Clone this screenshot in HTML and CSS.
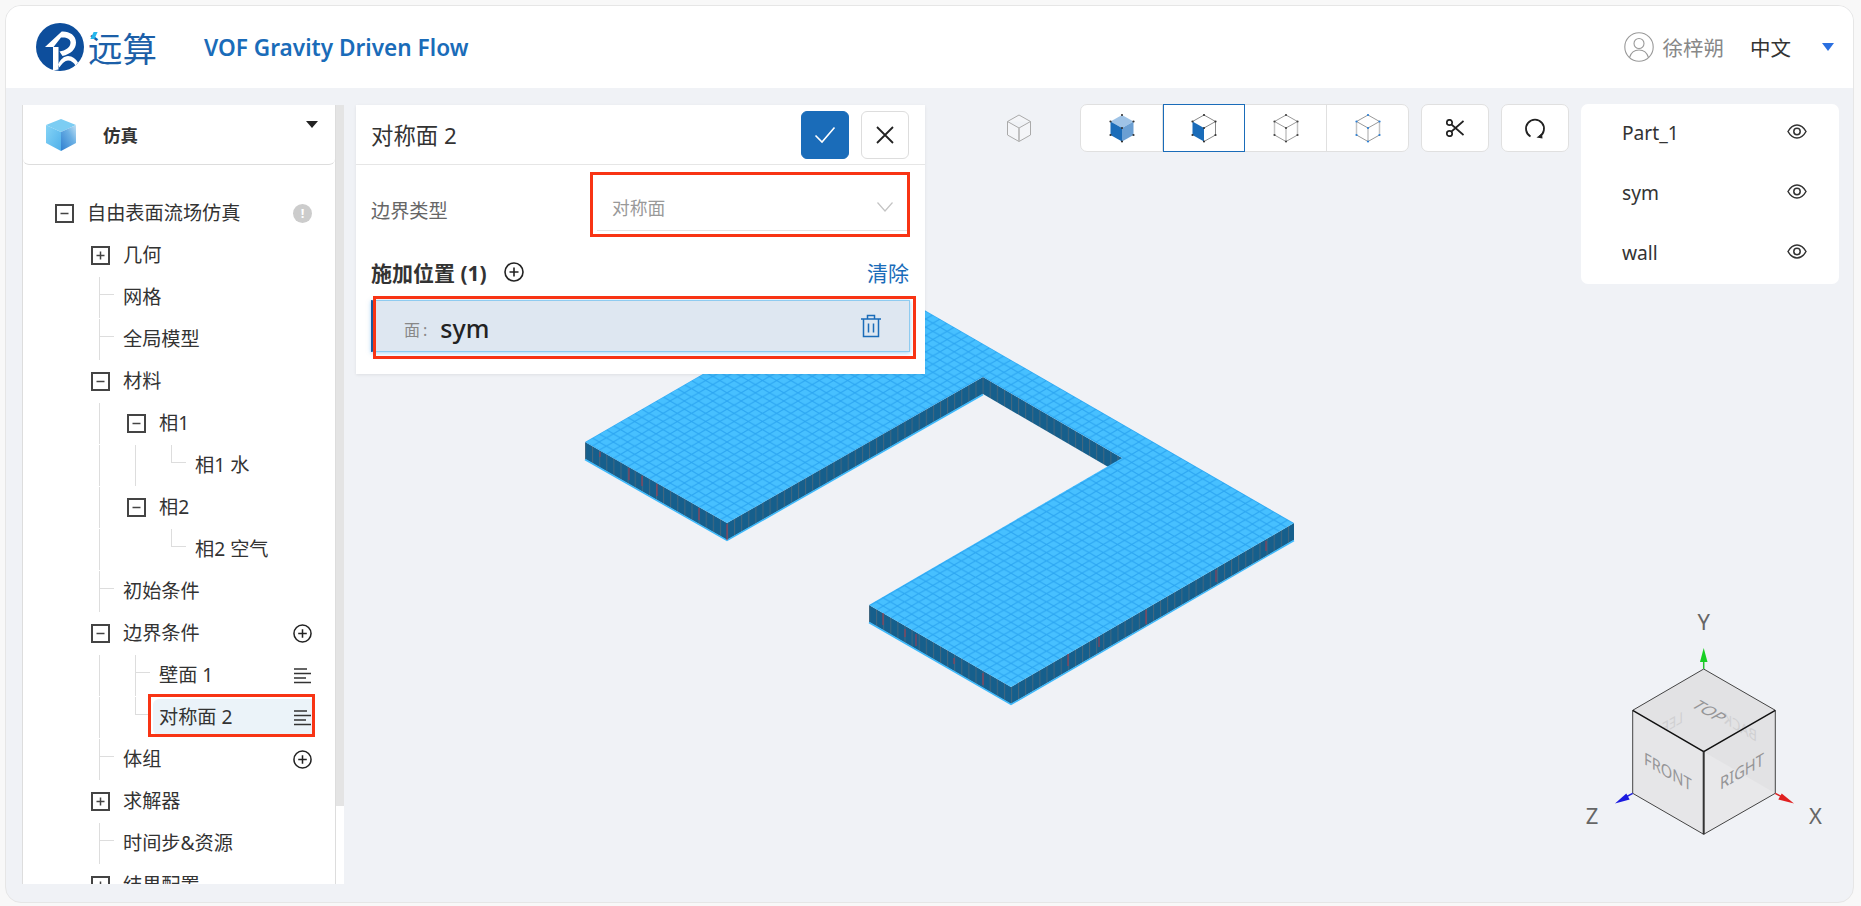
FILE: index.html
```html
<!DOCTYPE html>
<html lang="zh">
<head>
<meta charset="utf-8">
<title>VOF Gravity Driven Flow</title>
<link rel="stylesheet" href="styles.css">
</head>
<body>
<svg class="defs" width="0" height="0" aria-hidden="true">
  <defs>
    <symbol id="minus" viewBox="0 0 19 19"><rect x="1" y="1" width="17" height="17" fill="#fff" stroke="#444" stroke-width="2"/><path d="M5.5 9.5h8" stroke="#444" stroke-width="1.5"/></symbol>
    <symbol id="plus" viewBox="0 0 19 19"><rect x="1" y="1" width="17" height="17" fill="#fff" stroke="#444" stroke-width="2"/><path d="M5.5 9.5h8M9.5 5.5v8" stroke="#444" stroke-width="1.5"/></symbol>
    <symbol id="circplus" viewBox="0 0 20 20"><circle cx="10" cy="10" r="9" fill="none" stroke="#222" stroke-width="1.6"/><path d="M5.5 10h9M10 5.5v9" stroke="#222" stroke-width="1.6"/></symbol>
    <symbol id="lines" viewBox="0 0 19 18"><path d="M1 2.500h13M1 7h17M1 11.500h12M1 16h17" stroke="#333" stroke-width="1.500"/></symbol>
    <symbol id="eye" viewBox="0 0 20 15"><path d="M1 7.500C3.500 3 6.500 1 10 1s6.500 2 9 6.500C16.500 12 13.500 14 10 14S3.500 12 1 7.500Z" fill="none" stroke="#333" stroke-width="1.500"/><circle cx="10" cy="7.500" r="3.200" fill="none" stroke="#333" stroke-width="1.500"/></symbol>
    <g id="dots">
      <circle cx="0" cy="-13" r="1.100"/><circle cx="-11.500" cy="-6.500" r="1.100"/><circle cx="11.500" cy="-6.500" r="1.100"/><circle cx="-11.500" cy="7" r="1.100"/><circle cx="11.500" cy="7" r="1.100"/><circle cx="0" cy="13.500" r="1.100"/><circle cx="0" cy="0" r="1.100"/>
    </g>
    <pattern id="mesh" width="14.2" height="8.2" patternUnits="userSpaceOnUse" patternTransform="translate(585 442)">
      <rect width="14.2" height="8.2" fill="#47c0ff"/>
      <path d="M0 0L14.200 8.200M0 8.200L14.200 0" stroke="#2ca6f2" stroke-width="1"/>
    </pattern>
    <pattern id="side" width="7.1" height="20" patternUnits="userSpaceOnUse" patternTransform="translate(585 0)">
      <rect width="7.1" height="20" fill="#165f8c"/>
      <path d="M.5 0v20" stroke="#44677f" stroke-width="1"/>
    </pattern>
  </defs>
</svg>
<div class="app">
  <svg class="canvas" width="1861" height="906" viewBox="0 0 1861 906">
    <g class="walls" fill="url(#side)" stroke="none">
      <polygon points="585,442 727,523 727,540 585,459"/>
      <polygon points="727,523 983,377 983,394 727,540"/>
      <polygon points="983,377 1122,458 1122,475 983,394"/>
      <polygon points="869,605 1011,687 1011,704 869,622"/>
      <polygon points="1011,687 1294,523 1294,540 1011,704"/>
    </g>
    <path d="M585 459.500L727 540.500L983 394.500M869 622.500L1011 704.500L1294 540.500" fill="none" stroke="#3db8fa" stroke-width="1.500"/>
    <polygon points="869,278 1294,523 1011,687 869,605 1122,458 983,377 727,523 585,442" fill="url(#mesh)"/>
    <path d="M600 452v5M629 468v12M642 476v10M657 484v12M699 508v12M727 524v16M883 613v12M905 629v8M916 634v12M954 658v6M983 673v12M1068 654v12M1099 637v10M1146 610v14M1216 570v12M1266 541v10" stroke="#a83a4c" stroke-width="1"/>

    <polygon points="1703.700,669 1775.300,710.300 1703.700,751.700 1632.700,710.300" fill="#e2e2e4"/>
    <polygon points="1632.700,710.300 1703.700,751.700 1703.700,834.300 1632.700,793.300" fill="#e6e6e8"/>
    <polygon points="1703.700,751.700 1775.300,710.300 1775.300,793.300 1703.700,834.300" fill="#e2e2e4"/>
    <polygon points="1703.700,751.700 1775.300,793.300 1703.700,834.300" fill="#e8e8ea"/>
    <text class="ghost" transform="matrix(-.866 -.5 0 1 1757 742)">BACK</text>
    <text class="ghost" transform="matrix(-.866 .5 0 1 1683 722)">LEF</text>
    <text class="face" transform="matrix(.866 .5 -.866 .5 1690 706)">TOP</text>
    <text class="face" transform="matrix(.866 .5 0 1 1644 764)">FRONT</text>
    <text class="face" transform="matrix(.866 -.5 0 1 1720 790)">RIGHT</text>
    <path d="M1703.700 669L1775.300 710.300V793.300L1703.700 834.300L1632.700 793.300V710.300Z" fill="none" stroke="#444" stroke-width="1"/>
    <path d="M1632.700 710.300L1703.700 751.700L1775.300 710.300" fill="none" stroke="#111" stroke-width="1.500"/>
    <path d="M1703.700 751.700V834.300" stroke="#333" stroke-width="2"/>
    <path d="M1703.700 669V658" stroke="#22c22e" stroke-width="1.500"/>
    <polygon points="1703.700,648 1707.500,662 1700,662" fill="#18d024"/>
    <path d="M1632.700 793.300L1624 798" stroke="#2222dd" stroke-width="1.500"/>
    <polygon points="1615,803.500 1626.300,793.500 1629.700,799.500" fill="#1a1ae0"/>
    <path d="M1775.300 793.300L1784 798" stroke="#dd2222" stroke-width="1.500"/>
    <polygon points="1794,803.500 1781.700,793.500 1778.300,799.500" fill="#e02020"/>
    <text class="axis" x="1703.700" y="630" text-anchor="middle">Y</text>
    <text class="axis" x="1592" y="824" text-anchor="middle">Z</text>
    <text class="axis" x="1815.500" y="824" text-anchor="middle">X</text>
  </svg>

  <header class="header">
    <div class="logo">
      <svg class="logo-mark" width="48" height="48" viewBox="0 0 48 48">
        <circle cx="24" cy="24" r="24" fill="#0d4e9c"/>
        <path d="M25.700 8.500L9 24h8v23.500l5.500-1V24h-5L25 14.500c5-.5 9.500 1 9.500 5 0 5-5 8-11 9l3 4.500c8-2 13.500-6.500 13.500-13.500C40 12 33 8 25.700 8.500Z" fill="#fff"/>
        <path d="M22 41.500c2.500-5 6-8.500 10-8.500 4.500 0 8 3 10 6.500l-2.500 3C38 39.500 35 37.500 32 37.500c-3 0-6 3-8.500 7Z" fill="#fff"/>
      </svg>
      <span class="logo-text">远算<i class="logo-tick"></i></span>
    </div>
    <h1 class="title">VOF Gravity Driven Flow</h1>
    <div class="account">
      <svg class="avatar" width="30" height="30" viewBox="0 0 30 30"><circle cx="15" cy="15" r="14.200" fill="none" stroke="#999" stroke-width="1.100"/><circle cx="15" cy="11.500" r="5" fill="none" stroke="#999" stroke-width="1.100"/><path d="M5.500 25.500c1.500-5 5-7.500 9.500-7.500s8 2.500 9.500 7.500" fill="none" stroke="#999" stroke-width="1.100"/></svg>
      <span class="user">徐梓朔</span>
      <span class="lang">中文</span>
      <i class="lang-caret"></i>
    </div>
  </header>

  <main class="main">
    <aside class="side">
      <div class="tree-card">
        <div class="side-head">
          <svg class="side-cube" width="30" height="32" viewBox="0 0 30 32">
            <defs>
              <linearGradient id="cl" x1="0" y1="0" x2="1" y2="1"><stop offset="0" stop-color="#86d4f6"/><stop offset="1" stop-color="#4fb0ea"/></linearGradient>
              <linearGradient id="cr" x1="0" y1="1" x2="1" y2="0"><stop offset="0" stop-color="#2f7fd0"/><stop offset=".6" stop-color="#6bb0e4"/><stop offset="1" stop-color="#bfe0f4"/></linearGradient>
            </defs>
            <polygon points="15,0 30,6 15,13 0,6" fill="#7ccdf3"/>
            <polygon points="0,6 15,13 15,32 0,24" fill="url(#cl)"/>
            <polygon points="15,13 30,6 30,24 15,32" fill="url(#cr)"/>
          </svg>
          <span class="side-title">仿真</span>
          <i class="side-caret"></i>
        </div>
        <div class="tree">
          <div class="row l0"><svg class="exp"><use href="#minus"/></svg><div class="node">自由表面流场仿真<span class="alert">!</span></div></div>
          <div class="row l1"><svg class="exp"><use href="#plus"/></svg><div class="node">几何</div></div>
          <div class="row l1 leaf"><i class="g v a"></i><i class="g h a"></i><div class="node">网格</div></div>
          <div class="row l1 leaf"><i class="g v a"></i><i class="g h a"></i><div class="node">全局模型</div></div>
          <div class="row l1"><svg class="exp"><use href="#minus"/></svg><div class="node">材料</div></div>
          <div class="row l2"><i class="g v a"></i><svg class="exp"><use href="#minus"/></svg><div class="node">相1</div></div>
          <div class="row l3 leaf"><i class="g v a"></i><i class="g v b"></i><i class="g e c"></i><i class="g h c"></i><div class="node">相1 水</div></div>
          <div class="row l2"><i class="g v a"></i><svg class="exp"><use href="#minus"/></svg><div class="node">相2</div></div>
          <div class="row l3 leaf"><i class="g v a"></i><i class="g e c"></i><i class="g h c"></i><div class="node">相2 空气</div></div>
          <div class="row l1 leaf"><i class="g v a"></i><i class="g h a"></i><div class="node">初始条件</div></div>
          <div class="row l1"><svg class="exp"><use href="#minus"/></svg><div class="node">边界条件<svg class="act"><use href="#circplus"/></svg></div></div>
          <div class="row l2 leaf"><i class="g v a"></i><i class="g v b"></i><i class="g h b"></i><div class="node">壁面 1<svg class="act"><use href="#lines"/></svg></div></div>
          <div class="row l2 leaf sel"><i class="g v a"></i><i class="g e b"></i><i class="g h b"></i><div class="node">对称面 2<svg class="act"><use href="#lines"/></svg></div><span class="mark mark-row"></span></div>
          <div class="row l1 leaf"><i class="g v a"></i><i class="g h a"></i><div class="node">体组<svg class="act"><use href="#circplus"/></svg></div></div>
          <div class="row l1"><svg class="exp"><use href="#plus"/></svg><div class="node">求解器</div></div>
          <div class="row l1 leaf"><i class="g v a"></i><i class="g h a"></i><div class="node">时间步&amp;资源</div></div>
          <div class="row l1"><svg class="exp"><use href="#plus"/></svg><div class="node">结果配置</div></div>
        </div>
      </div>
      <div class="scroll"><div class="thumb"></div></div>
    </aside>

    <section class="panel">
      <div class="panel-head">
        <span class="panel-title">对称面 2</span>
        <div class="panel-btns">
          <button class="btn ok"><svg width="22" height="18" viewBox="0 0 22 18"><path d="M1.500 9.500L8 16L20.500 1.500" fill="none" stroke="#fff" stroke-width="1.600"/></svg></button>
          <button class="btn"><svg width="20" height="20" viewBox="0 0 20 20"><path d="M2 2L18 18M18 2L2 18" fill="none" stroke="#222" stroke-width="1.800"/></svg></button>
        </div>
      </div>
      <div class="field">
        <span class="field-label">边界类型</span>
        <div class="select"><span>对称面</span><svg width="16" height="10" viewBox="0 0 16 10"><path d="M.5.500L8 9L15.500.500" fill="none" stroke="#c4c4c4" stroke-width="1.200"/></svg></div>
      </div>
      <div class="apply">
        <span class="apply-title">施加位置 (1)</span>
        <svg class="apply-add"><use href="#circplus"/></svg>
        <a class="clear">清除</a>
      </div>
      <div class="item">
        <span class="item-kind">面:</span>
        <span class="item-name">sym</span>
        <svg class="trash" width="22" height="24" viewBox="0 0 22 24"><path d="M1 5h20M7.500 5V1.500h7V5M3.500 5v17.500h15V5M8.500 9.500v9M13.500 9.500v9" fill="none" stroke="#1a6cb9" stroke-width="1.500"/></svg>
      </div>
      <span class="mark mark-select"></span>
      <span class="mark mark-item"></span>
    </section>

    <div class="tools">
      <div class="solo">
        <svg width="26" height="30" viewBox="-13 -15 26 30"><path d="M0-13L11.500-6.500V7L0 13.500L-11.500 7V-6.500Z M-11.500-6.500L0 0L11.500-6.500" fill="#f4f5f8" stroke="#aaa" stroke-width="1"/><path d="M0 0V13.500" stroke="#bbb" stroke-width="1.800"/></svg>
      </div>
      <div class="group">
        <div class="seg">
          <svg width="26" height="30" viewBox="-13 -15 26 30">
            <polygon points="0,-13 11.500,-6.500 0,0 -11.500,-6.500" fill="#9fc3e6"/>
            <polygon points="-11.500,-6.500 0,0 0,13.500 -11.500,7" fill="#1a6cb9"/>
            <polygon points="0,0 11.500,-6.500 11.500,7 0,13.500" fill="#6a9fd3"/>
            <use href="#dots" fill="#333"/>
          </svg>
        </div>
        <div class="seg on">
          <svg width="26" height="30" viewBox="-13 -15 26 30">
            <path d="M0-13L11.500-6.500V7L0 13.500M-11.500-6.500L0-13M0 0L11.500-6.500" fill="none" stroke="#888" stroke-width="1"/>
            <polygon points="-11.500,-6.500 0,0 0,13.500 -11.500,7" fill="#1a6cb9"/>
            <use href="#dots" fill="#333"/>
          </svg>
        </div>
        <div class="seg">
          <svg width="26" height="30" viewBox="-13 -15 26 30">
            <path d="M0-13L11.500-6.500M0-13L-11.500-6.500L0 0L11.500-6.500M0 13.500L-11.500 7M0 13.500L11.500 7" fill="none" stroke="#999" stroke-width="1"/>
            <path d="M-11.500-6.500V7M11.500-6.500V7M0 0V13.500" stroke="#c4c4c4" stroke-width="1.500"/>
            <use href="#dots" fill="#444"/>
          </svg>
        </div>
        <div class="seg">
          <svg width="26" height="30" viewBox="-13 -15 26 30">
            <path d="M0-13L11.500-6.500M0-13L-11.500-6.500L0 0L11.500-6.500M0 13.500L-11.500 7M0 13.500L11.500 7" fill="none" stroke="#999" stroke-width="1"/>
            <path d="M-11.500-6.500V7M11.500-6.500V7M0 0V13.500" stroke="#c4c4c4" stroke-width="1.500"/>
            <use href="#dots" fill="#2a7fd6"/>
          </svg>
        </div>
      </div>
      <div class="tool">
        <svg width="18" height="18" viewBox="0 0 18 18"><path d="M5.500 5.500L17.500 16M5.500 12.500L17.500 2" fill="none" stroke="#222" stroke-width="1.700"/><circle cx="3.500" cy="3.500" r="2.700" fill="none" stroke="#222" stroke-width="1.700"/><circle cx="3.500" cy="14.500" r="2.700" fill="none" stroke="#222" stroke-width="1.700"/></svg>
      </div>
      <div class="tool tool-last">
        <svg width="22" height="22" viewBox="0 0 22 22"><path d="M6.500 19.500A9 9 0 1 1 15.500 19.500" fill="none" stroke="#222" stroke-width="1.800"/><polygon points="12.500,20.500 18,16.500 18.500,21.500" fill="#222"/></svg>
      </div>
      <ul class="parts">
        <li class="part">Part_1<svg class="eye"><use href="#eye"/></svg></li>
        <li class="part">sym<svg class="eye"><use href="#eye"/></svg></li>
        <li class="part">wall<svg class="eye"><use href="#eye"/></svg></li>
      </ul>
    </div>
  </main>
</div>
</body>
</html>
```

FILE: styles.css
```css
* { box-sizing: border-box; }
html, body { margin: 0; height: 100%; overflow: hidden; }
body {
  background: #f8f8f8;
  font-family: "Noto Sans", "Noto Sans CJK SC", sans-serif;
  color: #333;
  font-size: 19.2px;
}
.defs { position: absolute; }

.app {
  position: relative;
  width: 1849px;
  height: 898px;
  margin: 5px 0 0 5px;
  background: #f0f2f6;
  border: 1px solid #e6e6e6;
  border-radius: 16px;
  overflow: hidden;
}
.canvas { position: absolute; left: -6px; top: -6px; }
.ghost { font: 15px "Noto Sans", sans-serif; fill: #d0d0d2; }
.face { font: 17px "Noto Sans", sans-serif; fill: #959597; }
.axis { font: 22px "Noto Sans", sans-serif; fill: #666; }

.header {
  position: relative;
  display: flex;
  align-items: center;
  height: 82px;
  background: #fff;
  padding-left: 30px;
}
.logo { display: flex; align-items: center; gap: 4px; }
.logo-text {
  position: relative;
  font-family: "Noto Sans CJK SC", sans-serif;
  font-size: 34.5px;
  line-height: 40px;
  font-weight: 400;
  color: #1c5fa8;
}
.logo-tick {
  position: absolute;
  left: 4px;
  top: 5px;
  width: 4px;
  height: 7px;
  background: #25b6ec;
  transform: skewX(-25deg);
}
.title {
  margin: 0 0 0 47px;
  font-size: 22.6px;
  font-weight: 600;
  color: #1a6cb9;
}
.account { display: flex; align-items: center; margin-left: auto; padding-right: 19px; }
.user { margin-left: 9px; font-size: 20.5px; color: #888; }
.lang { margin-left: 26px; font-size: 20.5px; color: #333; }
.lang-caret {
  margin-left: 31px;
  border-left: 6px solid transparent;
  border-right: 6px solid transparent;
  border-top: 8px solid #2a6fe0;
}

.main {
  position: relative;
  display: flex;
  align-items: flex-start;
  padding: 16px 0 0 16px;
}
.side { display: flex; height: 780px; margin-top: 1px; }
.tree-card {
  width: 314px;
  height: 779px;
  background: #fff;
  border-left: 1px solid #ddd;
  border-right: 1px solid #ddd;
  overflow: hidden;
}
.side-head {
  display: flex;
  align-items: center;
  height: 60px;
  padding-left: 23px;
  border-bottom: 1px solid #ddd;
  border-radius: 0 0 6px 6px;
}
.side-title { margin-left: 27px; font-size: 17.5px; font-weight: 700; }
.side-caret {
  margin: -20px 0 0 auto;
  margin-right: 17px;
  border-left: 6px solid transparent;
  border-right: 6px solid transparent;
  border-top: 7px solid #222;
}
.scroll { width: 8px; height: 779px; background: #fff; }
.thumb { height: 701px; background: #e4e4e4; }

.tree { padding-top: 27px; }
.row {
  position: relative;
  display: flex;
  align-items: center;
  height: 42px;
  gap: 14px;
}
.l0 { padding-left: 32px; }
.l1 { padding-left: 68px; }
.l2 { padding-left: 104px; }
.l3 { padding-left: 140px; }
.leaf.l1 { padding-left: 101px; }
.leaf.l2 { padding-left: 137px; }
.leaf.l3 { padding-left: 173px; }
.exp { width: 19px; height: 19px; flex: none; }
.node {
  flex: 1;
  display: flex;
  align-items: center;
  justify-content: space-between;
  height: 36px;
  margin: 0 23px 0 -7px;
  padding: 0 0 2px 6px;
  border-radius: 6px 0 0 6px;
}
.sel .node { background: #ebf3f9; }
.act, .alert { margin-top: 2px; }
.act { width: 19px; height: 19px; flex: none; }
.alert {
  width: 19px;
  height: 19px;
  border-radius: 50%;
  background: #ccc;
  color: #fff;
  font-size: 13px;
  font-weight: 700;
  line-height: 19px;
  text-align: center;
}
.g { position: absolute; background: #ddd; }
.g.v { top: 1px; bottom: 0; width: 1px; }
.g.e { top: 1px; height: 18px; width: 1px; }
.g.h { top: 18px; height: 1px; width: 15px; }
.g.a { left: 76px; }
.g.b { left: 112px; }
.g.c { left: 148px; }

.panel {
  position: relative;
  width: 569px;
  height: 269px;
  margin: 1px 0 0 12px;
  background: #fff;
  box-shadow: 0 1px 3px rgba(0, 0, 0, .08);
}
.panel-head {
  display: flex;
  align-items: center;
  justify-content: space-between;
  height: 60px;
  padding: 0 16px 0 15px;
  border-bottom: 1px solid #e6e6e6;
}
.panel-title { font-size: 22.4px; }
.panel-btns { display: flex; gap: 12px; }
.btn {
  display: flex;
  align-items: center;
  justify-content: center;
  width: 48px;
  height: 48px;
  padding: 0;
  background: #fff;
  border: 1px solid #ddd;
  border-radius: 6px;
}
.ok { background: #1a6cb9; border-color: #1a6cb9; }
.field {
  display: flex;
  align-items: center;
  height: 44px;
  margin-top: 22px;
  padding: 0 15px;
}
.field-label { color: #666; padding-top: 2px; }
.select {
  display: flex;
  align-items: center;
  justify-content: space-between;
  width: 313px;
  height: 44px;
  margin-left: auto;
  padding: 0 17px 4px 15px;
  font-size: 17.8px;
  color: #999;
  border-bottom: 1px solid #e4e4e4;
}
.apply {
  display: flex;
  align-items: center;
  height: 30px;
  margin-top: 26px;
  padding: 0 16px 0 15px;
}
.apply-title { font-size: 21px; font-weight: 700; }
.apply-add { width: 20px; height: 20px; margin-left: 17px; }
.clear { margin-left: auto; font-size: 21px; color: #1a6cb9; }
.item {
  display: flex;
  align-items: center;
  height: 52px;
  margin: 13px 15px 0 15px;
  padding: 0 27px 0 28px;
  background: #dee7f1;
  border: 1px solid #8ecbf0;
  border-left: 5px solid #1a5a9e;
  box-shadow: 0 1px 4px rgba(80, 170, 235, .5);
}
.item-kind { padding-top: 6px; font-size: 16px; letter-spacing: 3px; color: #888; }
.item-name { margin-left: 10px; padding-top: 3px; font-size: 25px; font-weight: 500; color: #222; }
.trash { margin-left: auto; }
.mark {
  position: absolute;
  border: 3px solid #f83414;
}
.mark-row { left: 125px; top: -2px; width: 167px; height: 43px; }
.mark-select { left: 234px; top: 67px; width: 320px; height: 65px; }
.mark-item { left: 17px; top: 191px; width: 543px; height: 63px; }

.tools { position: relative; display: flex; align-items: flex-start; flex: 1; }
.solo { display: flex; align-items: center; justify-content: center; width: 26px; height: 48px; margin: 0 48px 0 81px; }
.group {
  display: flex;
  height: 48px;
  background: #fff;
  border: 1px solid #e0e0e0;
  border-radius: 7px;
}
.seg {
  display: flex;
  align-items: center;
  justify-content: center;
  width: 82px;
  border-right: 1px solid #e0e0e0;
}
.seg:last-child { border-right: 0; width: 81px; }
.seg.on { margin: -1px 0; border: 1px solid #1a6cb9; }
.tool {
  display: flex;
  align-items: center;
  justify-content: center;
  width: 68px;
  height: 48px;
  margin-left: 12px;
  background: #fff;
  border: 1px solid #e0e0e0;
  border-radius: 7px;
}
.parts {
  width: 258px;
  margin: 0 0 0 12px;
  padding: 0 0 0 41px;
  background: #fff;
  border-radius: 7px;
  list-style: none;
}
.part {
  display: flex;
  align-items: center;
  justify-content: space-between;
  height: 60px;
  padding: 0 32px 4px 0;
}
.eye { width: 20px; height: 15px; margin-top: -1px; }
```
